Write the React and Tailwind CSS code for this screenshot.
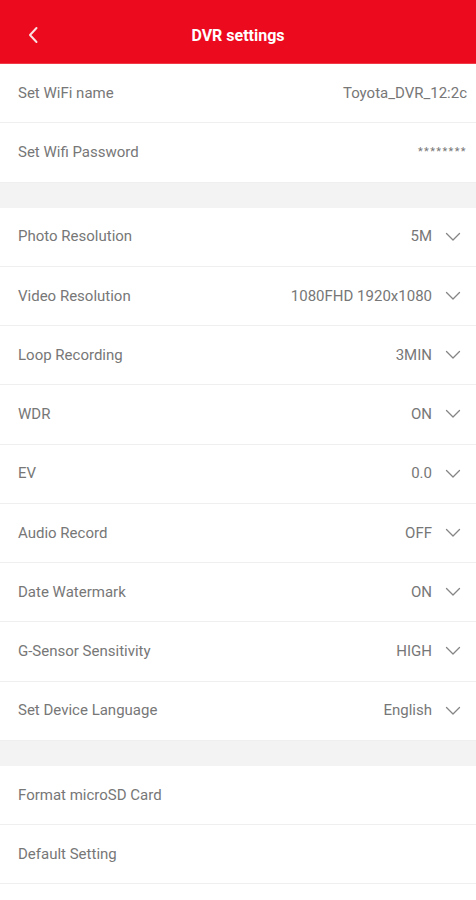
import React from 'react';

const groupOne = [
  { label: 'Set WiFi name', value: 'Toyota_DVR_12:2c' },
  { label: 'Set Wifi Password', value: '********', small: true },
];

const groupTwo = [
  { label: 'Photo Resolution', value: '5M' },
  { label: 'Video Resolution', value: '1080FHD 1920x1080' },
  { label: 'Loop Recording', value: '3MIN' },
  { label: 'WDR', value: 'ON' },
  { label: 'EV', value: '0.0' },
  { label: 'Audio Record', value: 'OFF' },
  { label: 'Date Watermark', value: 'ON' },
  { label: 'G-Sensor Sensitivity', value: 'HIGH' },
  { label: 'Set Device Language', value: 'English' },
];

const groupThree = [{ label: 'Format microSD Card' }, { label: 'Default Setting' }];

function Chevron() {
  return (
    <svg width="16" height="10" viewBox="0 0 16 10" fill="none" className="ml-[13px]">
      <path d="M1.5 1.5 8 8l6.5-6.5" stroke="#858585" strokeWidth="1.3" strokeLinecap="round" strokeLinejoin="round" />
    </svg>
  );
}

function Row({ item, select }) {
  return (
    <div className="h-[59.25px] flex items-center justify-between pl-[18px] border-b border-[#efefef] bg-white">
      <span>{item.label}</span>
      {select ? (
        <div className="flex items-center pr-[15px]">
          <span>{item.value}</span>
          <Chevron />
        </div>
      ) : (
        item.value && (
          <span className={item.small ? 'pr-[9px] text-[11px] tracking-[1.4px]' : 'pr-[9px]'}>{item.value}</span>
        )
      )}
    </div>
  );
}

export default function App() {
  return (
    <div className="w-[476px] h-[900px] bg-white text-[15px] text-[#777777] font-['Roboto',sans-serif]">
      <div className="h-[64px] bg-[#ec0a1e] border-b border-[#f03a48] flex items-center relative">
        <svg width="12" height="18" viewBox="0 0 12 18" fill="none" className="absolute left-[27px] top-[26px]">
          <path d="M9.5 2 3 9l6.5 7" stroke="#fbe0e2" strokeWidth="2" strokeLinecap="round" strokeLinejoin="round" />
        </svg>
        <h1 className="w-full text-center text-white text-[16px] font-bold pt-[8px]">DVR settings</h1>
      </div>
      <div>
        {groupOne.map((item) => (
          <Row key={item.label} item={item} />
        ))}
      </div>
      <div className="h-[25px] bg-[#f3f3f3]" />
      <div>
        {groupTwo.map((item) => (
          <Row key={item.label} item={item} select />
        ))}
      </div>
      <div className="h-[25px] bg-[#f3f3f3]" />
      <div>
        {groupThree.map((item) => (
          <Row key={item.label} item={item} />
        ))}
      </div>
    </div>
  );
}
